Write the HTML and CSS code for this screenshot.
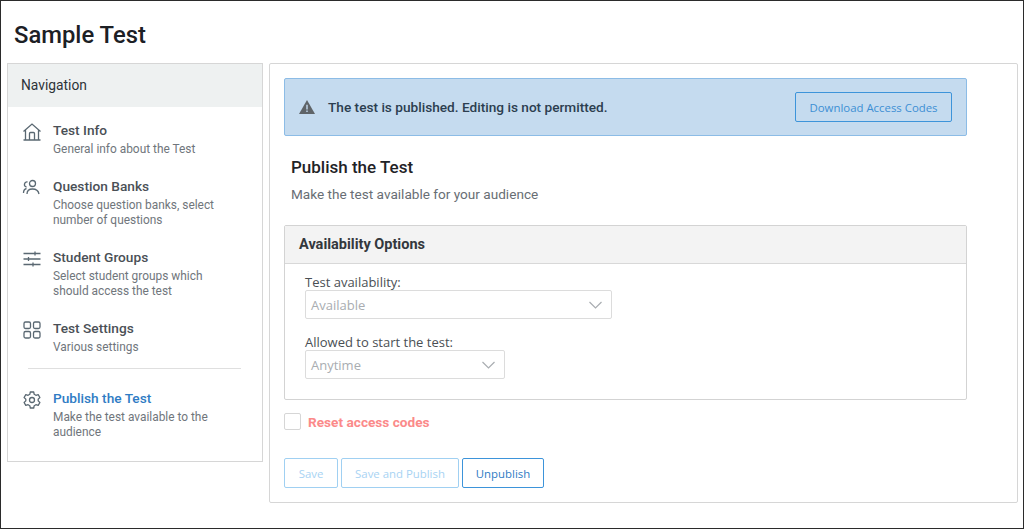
FILE: index.html
```html
<!DOCTYPE html>
<html lang="en">
<head>
    <meta charset="UTF-8">
    <meta name="viewport" content="width=device-width, initial-scale=1.0">
    <title>Sample Test</title>
    <link rel="stylesheet" href="styles.css">
</head>
<body>

<div class="page">
    <h1 class="page-title">Sample Test</h1>

    <div class="columns">
        <nav class="sidebar">
            <div class="sidebar-header">Navigation</div>
            <ul class="nav-list">
                <li class="nav-item">
                    <svg class="nav-icon" viewBox="0 0 20 20"><path d="M1.500 9.500 10 2l8.500 7.500M3.500 8v10h13V8M1.500 18h17M7.500 18v-6.500a1 1 0 0 1 1-1h3a1 1 0 0 1 1 1V18"/></svg>
                    <div>
                        <div class="nav-title">Test Info</div>
                        <div class="nav-desc">General info about the Test</div>
                    </div>
                </li>
                <li class="nav-item">
                    <svg class="nav-icon" viewBox="0 0 20 20"><circle cx="10.500" cy="5.500" r="3"/><path d="M5 16c0-3.500 2.200-5 5.500-5s5.800 1.500 6.500 5M5.500 4A2.500 2.500 0 0 0 4.500 9M1.500 15c0-2.500 1-4 3-4.500"/></svg>
                    <div>
                        <div class="nav-title">Question Banks</div>
                        <div class="nav-desc">Choose question banks, select number of questions</div>
                    </div>
                </li>
                <li class="nav-item">
                    <svg class="nav-icon" viewBox="0 0 20 20"><path d="M1.500 4.500h17M1.500 10h17M1.500 15.500h17M13 2.500v4M6.500 8v4M11 13.500v4"/></svg>
                    <div>
                        <div class="nav-title">Student Groups</div>
                        <div class="nav-desc">Select student groups which should access the test</div>
                    </div>
                </li>
                <li class="nav-item">
                    <svg class="nav-icon" viewBox="0 0 20 20"><rect x="2" y="2" width="6.500" height="6.500" rx="1.500"/><rect x="11.500" y="2" width="6.500" height="6.500" rx="1.500"/><rect x="2" y="11.500" width="6.500" height="6.500" rx="1.500"/><rect x="11.500" y="11.500" width="6.500" height="6.500" rx="1.500"/></svg>
                    <div>
                        <div class="nav-title">Test Settings</div>
                        <div class="nav-desc">Various settings</div>
                    </div>
                </li>
                <li class="nav-divider"></li>
                <li class="nav-item">
                    <svg class="nav-icon" viewBox="0 0 20 20"><circle cx="10" cy="10" r="2.500"/><path d="M8.300 2h3.400l.5 2.300 1.700 1 2.300-.7 1.700 2.900-1.700 1.600v1.800l1.700 1.600-1.700 2.900-2.300-.7-1.700 1-.5 2.300H8.300l-.5-2.300-1.700-1-2.300.7-1.700-2.900 1.700-1.600V9.100L2.100 7.500l1.700-2.900 2.300.7 1.700-1z" stroke-linejoin="round"/></svg>
                    <div>
                        <div class="nav-title active">Publish the Test</div>
                        <div class="nav-desc">Make the test available to the audience</div>
                    </div>
                </li>
            </ul>
        </nav>

        <main class="content">
            <div class="alert">
                <svg class="alert-icon" viewBox="0 0 16 14"><path d="M8 0 16 14H0z" fill="#5f6468"/><path d="M7.300 4.800h1.400v4.700H7.300zM7.300 10.500h1.400v1.400H7.300z" fill="#c5dbef"/></svg>
                <span class="alert-text">The test is published. Editing is not permitted.</span>
                <button class="btn btn-alert">Download Access Codes</button>
            </div>

            <h2 class="section-title">Publish the Test</h2>
            <p class="section-desc">Make the test available for your audience</p>

            <section class="panel">
                <div class="panel-header">Availability Options</div>
                <div class="panel-body">
                    <label class="field-label">Test availability:</label>
                    <div class="select select-wide">
                        <span>Available</span>
                        <svg class="chevron" viewBox="0 0 14 8"><path d="M1 1l6 6 6-6"/></svg>
                    </div>
                    <label class="field-label second">Allowed to start the test:</label>
                    <div class="select select-narrow">
                        <span>Anytime</span>
                        <svg class="chevron" viewBox="0 0 14 8"><path d="M1 1l6 6 6-6"/></svg>
                    </div>
                </div>
            </section>

            <div class="reset-row">
                <span class="checkbox"></span>
                <span class="reset-label">Reset access codes</span>
            </div>

            <div class="actions">
                <button class="btn btn-disabled btn-save">Save</button>
                <button class="btn btn-disabled btn-publish">Save and Publish</button>
                <button class="btn btn-unpublish">Unpublish</button>
            </div>
        </main>
    </div>
</div>

</body>
</html>
```

FILE: styles.css
```css
* {
    box-sizing: border-box;
}

body {
    font-family: Roboto, Arial, sans-serif;
    background-color: white;
    margin: 0;
}

.page {
    height: 529px;
    border: 1px solid #2b2b2b;
    padding: 0 5px 0 6px;
    overflow: hidden;
}

.page-title {
    margin: 0;
    padding: 20px 0 0 7px;
    height: 62px;
    font-size: 23.8px;
    line-height: 28px;
    font-weight: 500;
    color: #1c2025;
}

.columns {
    display: flex;
    align-items: flex-start;
    gap: 6px;
}

.sidebar {
    width: 256px;
    height: 399px;
    border: 1px solid #d6d6d6;
}

.sidebar-header {
    height: 43px;
    padding: 13px 13px;
    font-size: 13.8px;
    line-height: 17px;
    color: #2d3338;
    background-color: #eef1f1;
}

.nav-list {
    list-style: none;
    margin: 0;
    padding: 15px 0 0 14px;
}

.nav-item {
    display: flex;
    gap: 11px;
    margin-bottom: 21px;
}

.nav-icon {
    width: 20px;
    height: 20px;
    flex: none;
    fill: none;
    stroke: #5a6872;
    stroke-width: 1.3;
}

.nav-title {
    font-size: 13.7px;
    line-height: 17px;
    font-weight: 500;
    color: #4a5056;
    margin-bottom: 3px;
}

.nav-title.active {
    color: #2f7cc4;
}

.nav-desc {
    width: 180px;
    font-size: 11.9px;
    line-height: 15px;
    color: #70767c;
}

.nav-divider {
    width: 213px;
    height: 1px;
    margin: -8px 0 21px 6px;
    background-color: #dfdfdf;
}

.content {
    width: 749px;
    height: 440px;
    padding: 14px 0 0 14px;
    border: 1px solid #d6d6d6;
    border-radius: 2px;
}

.alert {
    display: flex;
    align-items: center;
    width: 683px;
    height: 58px;
    padding: 0 14px;
    background-color: #c5dbef;
    border: 1px solid #8cbce6;
    border-radius: 2px;
}

.alert-icon {
    width: 16px;
    height: 14px;
    flex: none;
    margin-right: 13px;
}

.alert-text {
    flex: 1;
    font-size: 13.65px;
    font-weight: 500;
    color: #2c3e50;
}

.btn {
    font-family: "Open Sans", Arial, sans-serif;
    font-size: 11.4px;
    height: 30px;
    background: none;
    border: 1px solid #3d94da;
    border-radius: 2px;
    padding: 0;
}

.btn-alert {
    width: 157px;
    color: #3d8fd4;
}

.section-title {
    margin: 21px 0 0 7px;
    font-size: 17px;
    line-height: 20px;
    font-weight: 500;
    color: #1f2327;
}

.section-desc {
    margin: 9px 0 0 7px;
    font-size: 13.6px;
    line-height: 17px;
    color: #686e74;
}

.panel {
    width: 683px;
    height: 175px;
    margin-top: 22px;
    border: 1px solid #d3d3d3;
    border-radius: 2px;
}

.panel-header {
    height: 38px;
    padding: 11px 14px;
    font-size: 14.5px;
    line-height: 16px;
    font-weight: 700;
    color: #33383d;
    background-color: #f3f3f3;
    border-bottom: 1px solid #d8d8d8;
}

.panel-body {
    padding: 11px 20px;
}

.field-label {
    display: block;
    font-family: "Open Sans", Arial, sans-serif;
    font-size: 13px;
    line-height: 15px;
    color: #4a4f54;
}

.field-label.second {
    margin-top: 16px;
}

.select {
    display: flex;
    align-items: center;
    justify-content: space-between;
    height: 29px;
    padding: 0 8px 0 5px;
    font-family: "Open Sans", Arial, sans-serif;
    font-size: 13px;
    color: #a9adb1;
    border: 1px solid #dcdcdc;
    border-radius: 2px;
}

.select-wide {
    width: 307px;
}

.select-narrow {
    width: 200px;
}

.chevron {
    width: 15px;
    height: 8px;
    fill: none;
    stroke: #a9adb1;
    stroke-width: 1.2;
}

.reset-row {
    display: flex;
    align-items: center;
    gap: 7px;
    margin-top: 13px;
}

.checkbox {
    width: 17px;
    height: 17px;
    border: 1px solid #d6d6d6;
    border-radius: 2px;
}

.reset-label {
    font-size: 13.65px;
    font-weight: 700;
    color: #fb8a8a;
}

.actions {
    display: flex;
    gap: 3px;
    margin-top: 28px;
}

.btn-disabled {
    color: #a8d3f3;
    border-color: #a0d0f2;
}

.btn-save {
    width: 54px;
}

.btn-publish {
    width: 118px;
}

.btn-unpublish {
    width: 82px;
    color: #2f7cc4;
}
```
